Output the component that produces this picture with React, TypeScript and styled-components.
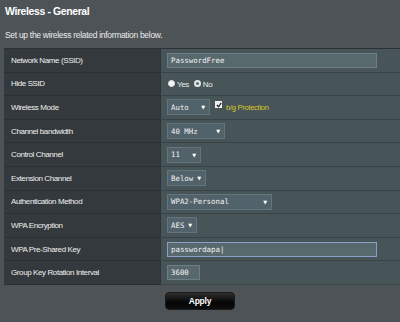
import styled, { createGlobalStyle } from 'styled-components';

const GlobalStyle = createGlobalStyle`
  html, body {
    margin: 0;
    padding: 0;
    background: #4d5357;
    font-family: 'Liberation Sans', Arial, sans-serif;
  }
`;

const Page = styled.div`
  width: 400px;
  height: 322px;
  overflow: hidden;
  background: #4d5357;
  padding: 0 0 0 4px;
  box-sizing: border-box;
`;

const Title = styled.div`
  color: #ffffff;
  font-size: 10.5px;
  letter-spacing: -0.4px;
  font-weight: bold;
  padding: 5px 0 0 1px;
  height: 25px;
  box-sizing: border-box;
`;

const Intro = styled.div`
  color: #ececec;
  font-size: 8.5px;
  letter-spacing: -0.3px;
  padding: 5px 0 0 1px;
  height: 23px;
  box-sizing: border-box;
`;

const Table = styled.div`
  display: grid;
  grid-template-columns: 156px 1fr;
  border-top: 1px solid #2c3234;
`;

const Label = styled.div`
  background: #33393c;
  color: #f0f0f0;
  font-size: 8px;
  letter-spacing: -0.4px;
  height: 23.6px;
  box-sizing: border-box;
  display: flex;
  align-items: center;
  padding-left: 7px;
  border-bottom: 1px solid #2a2f32;
`;

const Value = styled.div`
  background: #475559;
  height: 23.6px;
  box-sizing: border-box;
  display: flex;
  align-items: center;
  gap: 4px;
  padding-left: 6px;
  border-bottom: 1px solid #394346;
  border-left: 1px solid #2e3437;
`;

const TextBox = styled.div<{ $w: number; $focus?: boolean }>`
  width: ${({ $w }) => $w}px;
  height: 15px;
  box-sizing: border-box;
  background: #58696e;
  border: 1px solid ${({ $focus }) => ($focus ? '#8c9fc8' : '#6d7f84')};
  color: #f2f2f2;
  font-family: 'DejaVu Sans Mono', 'Liberation Mono', monospace;
  font-size: 7.4px;
  display: flex;
  align-items: center;
  padding-left: 3px;
`;

const Select = styled.div<{ $w: number }>`
  width: ${({ $w }) => $w}px;
  height: 16px;
  box-sizing: border-box;
  background: #52626a;
  border: 1px solid #63747a;
  color: #f2f2f2;
  font-family: 'DejaVu Sans Mono', 'Liberation Mono', monospace;
  font-size: 7.4px;
  display: flex;
  align-items: center;
  justify-content: space-between;
  padding: 0 4px 0 3px;
`;

const Arrow = styled.span`
  font-size: 5px;
  color: #ffffff;
  font-family: 'DejaVu Sans', sans-serif;
`;

const Radio = styled.span<{ $on: boolean }>`
  width: 7px;
  height: 7px;
  border-radius: 50%;
  box-sizing: border-box;
  background: ${({ $on }) => ($on ? '#f4f4f4' : '#5b6a6f')};
  border: ${({ $on }) => ($on ? '1px solid #e6e6e6' : '2px solid #e6e6e6')};
  margin-left: 1px;
`;

const RadioText = styled.span`
  color: #ececec;
  font-size: 8px;
  letter-spacing: -0.4px;
  margin-left: -2px;
  margin-top: 2px;
`;

const Check = styled.span`
  width: 7px;
  height: 7px;
  background: #f0f0f0;
  display: flex;
  align-items: center;
  justify-content: center;
  margin-top: -5px;
  margin-left: 1px;
`;

const Yellow = styled.span`
  color: #d9c629;
  font-size: 7.6px;
  letter-spacing: -0.3px;
`;

const Footer = styled.div`
  display: flex;
  justify-content: center;
  padding: 7px 0 0 0;
`;

const Apply = styled.button`
  width: 70px;
  height: 18px;
  border-radius: 4px;
  border: 1px solid #1a1a1a;
  background: linear-gradient(#2e2e2e, #050505 60%, #0e0e0e);
  color: #ffffff;
  font-family: 'Liberation Sans', Arial, sans-serif;
  font-weight: bold;
  font-size: 8.5px;
  letter-spacing: -0.2px;
  padding: 0;
  margin-right: 4px;
`;

const selectRows: [string, string, number][] = [
  ['Channel bandwidth', '40 MHz', 58],
  ['Control Channel', '11', 34],
  ['Extension Channel', 'Below', 39],
  ['Authentication Method', 'WPA2-Personal', 105],
  ['WPA Encryption', 'AES', 30],
];

export default function App() {
  return (
    <Page>
      <GlobalStyle />
      <Title>Wireless - General</Title>
      <Intro>Set up the wireless related information below.</Intro>
      <Table>
        <Label>Network Name (SSID)</Label>
        <Value>
          <TextBox $w={210}>PasswordFree</TextBox>
        </Value>
        <Label>Hide SSID</Label>
        <Value>
          <Radio $on />
          <RadioText>Yes</RadioText>
          <Radio $on={false} />
          <RadioText>No</RadioText>
        </Value>
        <Label>Wireless Mode</Label>
        <Value>
          <Select $w={43}>
            Auto<Arrow>▼</Arrow>
          </Select>
          <Check>
            <svg width="6" height="6" viewBox="0 0 7 7">
              <path d="M1 3.5 L3 5.5 L6 1" stroke="#222" strokeWidth="1.4" fill="none" />
            </svg>
          </Check>
          <Yellow>b/g Protection</Yellow>
        </Value>
        {selectRows.map(([label, val, w]) => (
          <>
            <Label key={label + 'l'}>{label}</Label>
            <Value key={label + 'v'}>
              <Select $w={w}>
                {val}
                <Arrow>▼</Arrow>
              </Select>
            </Value>
          </>
        ))}
        <Label>WPA Pre-Shared Key</Label>
        <Value>
          <TextBox $w={210} $focus>passwordapa|</TextBox>
        </Value>
        <Label>Group Key Rotation Interval</Label>
        <Value>
          <TextBox $w={33}>3600</TextBox>
        </Value>
      </Table>
      <Footer>
        <Apply>Apply</Apply>
      </Footer>
    </Page>
  );
}
